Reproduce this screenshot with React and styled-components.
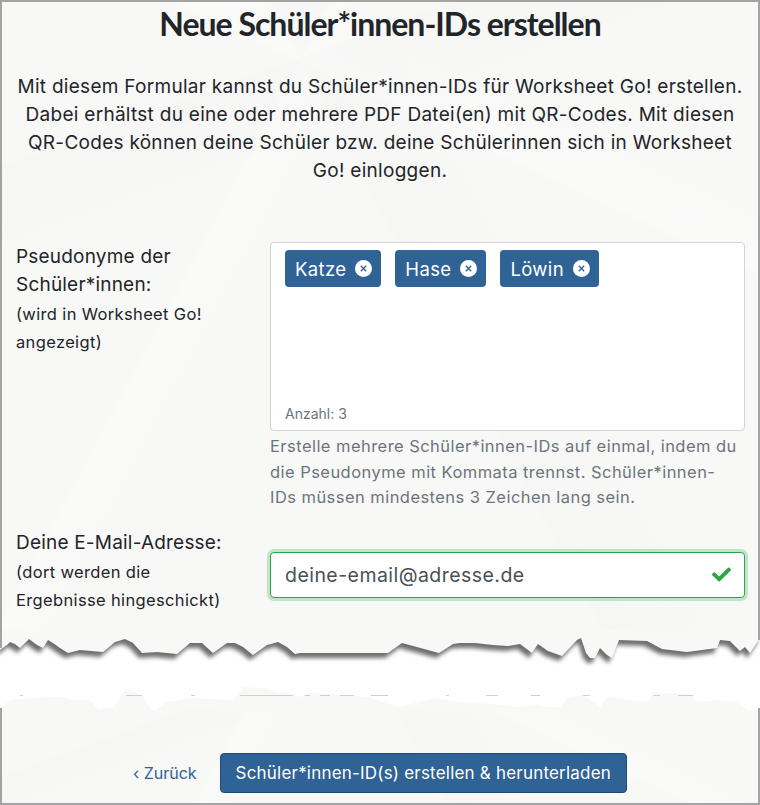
import React from "react";
import styled, { createGlobalStyle } from "styled-components";
import { FaCheck } from "react-icons/fa";

const TEXT_FONT = `Inter, "Open Sans", sans-serif`;
const PAPER = "#f8f8f7";
const BLUE = "#2f6295";

// torn paper edges, taken from the screenshot (y is relative to the top of the svg)
const upperEdge =
  "0,20 7,15 10,12 15,14 20,18 29,9 37,15 43,18 48,10 53,13 60,18 68,23 80,20 103,22 115,12 125,9 133,13 142,23 157,22 177,24 190,13 202,13 213,23 227,13 235,13 243,17 253,25 267,15 278,12 287,17 295,24 300,23 388,23 402,13 439,23 453,14 460,13 475,13 493,15 508,16 520,14 532,23 538,14 548,21 562,26 577,10 581,8 586,23 590,28 595,28 600,18 607,25 612,28 619,10 647,11 662,19 687,22 717,18 720,10 730,11 740,21 745,17 750,23 760,8";
const lowerEdge =
  "0,78 10,70 33,68 60,67 73,70 90,70 98,79 113,78 126,59 142,65 153,82 167,72 190,68 233,70 243,57 263,58 293,65 300,67 310,62 340,65 368,67 398,77 436,68 460,72 480,73 503,75 517,77 537,75 547,77 560,77 568,67 583,65 600,77 607,67 647,72 653,63 677,63 693,65 697,72 720,70 737,72 747,80 760,80";
const remnants = [
  [20, 23],
  [126, 142],
  [191, 195],
  [240, 293],
  [305, 310],
  [320, 330],
  [340, 354],
  [371, 388],
  [446, 449],
  [486, 498],
  [531, 540],
  [583, 590],
  [654, 660],
  [678, 693],
];

const chips = ["Katze", "Hase", "Löwin"];

const GlobalStyle = createGlobalStyle`
  html, body {
    margin: 0;
    padding: 0;
    background: #fff;
  }
  body {
    font-family: ${TEXT_FONT};
    color: #212529;
  }
`;

const Page = styled.div`
  width: 760px;
  height: 805px;
  overflow: hidden;
  display: flex;
  flex-direction: column;
`;

const paper = `
  background-color: ${PAPER};
  background-image:
    linear-gradient(118deg, transparent 30%, rgba(255,255,255,.3) 30.4%, transparent 36%),
    linear-gradient(62deg, transparent 55%, rgba(0,0,0,.006) 55.3%, transparent 68%),
    linear-gradient(160deg, transparent 18%, rgba(0,0,0,.006) 18.3%, transparent 30%),
    linear-gradient(25deg, transparent 72%, rgba(255,255,255,.3) 72.3%, transparent 80%);
`;

const UpperSheet = styled.div`
  ${paper}
  height: 630px;
  box-sizing: border-box;
  border: 2px solid #a3a3a3;
  border-bottom: 0;
`;

const LowerSheet = styled.div`
  ${paper}
  flex: 1;
  box-sizing: border-box;
  border: 2px solid #a3a3a3;
  border-top: 0;
  padding-top: 43px;
`;

const Title = styled.h1`
  margin: 0;
  text-align: center;
  font-family: Lato, sans-serif;
  font-size: 32px;
  font-weight: 700;
  line-height: 44px;
  letter-spacing: -1px;
  color: #212529;
`;

const Intro = styled.p`
  margin: 27px 0 57px;
  text-align: center;
  font-size: 19px;
  letter-spacing: 0.28px;
  line-height: 28px;
`;

const FormRow = styled.div`
  display: grid;
  grid-template-columns: 254px 475px;
  padding-left: 14px;
  margin-bottom: ${(p) => p.$gap || 0}px;
`;

const Label = styled.label`
  display: block;
  padding-top: 1px;
  font-size: 19px;
  letter-spacing: 0.2px;
  line-height: 28px;
`;

const LabelNote = styled.small`
  display: block;
  margin-top: 1px;
  font-size: 16.5px;
  letter-spacing: 0.35px;
  line-height: 28px;
`;

const TagBox = styled.div`
  box-sizing: border-box;
  height: 189px;
  padding: 7px 14px 6px;
  background: #fff;
  border: 1px solid #ced4da;
  border-radius: 4px;
  display: flex;
  flex-direction: column;
  justify-content: space-between;
`;

const TagList = styled.div`
  display: flex;
  gap: 14px;
`;

const Tag = styled.span`
  height: 37px;
  padding: 0 9px 0 10px;
  display: flex;
  align-items: center;
  gap: 9px;
  background: ${BLUE};
  border-radius: 4px;
  color: #fff;
  font-size: 18.5px;
  letter-spacing: 0.35px;
`;

const TagCounter = styled.div`
  font-size: 14px;
  line-height: 20px;
  color: #6c757d;
`;

const HelpText = styled.div`
  margin-top: 3px;
  font-size: 16.5px;
  letter-spacing: 0.45px;
  line-height: 25.5px;
  color: #6c757d;
`;

const EmailField = styled.div`
  box-sizing: border-box;
  height: 46px;
  margin-top: 24px;
  padding: 0 14px;
  display: flex;
  align-items: center;
  justify-content: space-between;
  background: #fff;
  border: 1px solid #28a745;
  border-radius: 4px;
  box-shadow: 0 0 0 3px rgba(40, 167, 69, 0.25);
  font-size: 19.5px;
  letter-spacing: 0.45px;
  color: #495057;
`;

const ValidIcon = styled(FaCheck)`
  width: 19px;
  height: 19px;
  margin-right: -1px;
  color: #28a745;
`;

const TornGap = styled.svg`
  display: block;
  flex: none;
`;

const Actions = styled.div`
  display: flex;
  align-items: center;
  justify-content: center;
  gap: 23px;
`;

const BackLink = styled.a`
  font-size: 16px;
  color: ${BLUE};
`;

const SubmitButton = styled.button`
  box-sizing: border-box;
  height: 40px;
  padding: 0 15px;
  background: ${BLUE};
  border: 1px solid #1f4a75;
  border-radius: 4px;
  color: #fff;
  font-family: ${TEXT_FONT};
  font-size: 17px;
  letter-spacing: 0.2px;
`;

const CloseIcon = () => (
  <svg width="17" height="17" viewBox="0 0 17 17">
    <circle cx="8.5" cy="8.5" r="8.5" fill="#fff" />
    <path d="M5.8 5.8l5.4 5.4M11.2 5.8l-5.4 5.4" stroke={BLUE} strokeWidth="1.3" fill="none" />
  </svg>
);

const TornEdges = () => (
  <TornGap width="760" height="80" viewBox="0 0 760 80">
    <defs>
      <filter id="tornShadow" x="-5%" y="-30%" width="110%" height="160%">
        <feGaussianBlur stdDeviation="2" />
      </filter>
    </defs>
    <rect width="760" height="80" fill="#fff" />
    <polygon points={`${lowerEdge} 760,80 0,80`} fill={PAPER} />
    {remnants.map(([from, to]) => (
      <rect key={from} x={from} y="65" width={to - from} height="1" fill="#cfcfcd" />
    ))}
    <rect x="0" y="78" width="2" height="2" fill="#a3a3a3" />
    <rect x="758" y="78" width="2" height="2" fill="#a3a3a3" />
    <polygon
      points={`${upperEdge} 760,0 0,0`}
      fill="#6e6e6e"
      filter="url(#tornShadow)"
      transform="translate(-3 5)"
    />
    <polygon points={`${upperEdge} 760,0 0,0`} fill={PAPER} />
    <rect x="0" y="0" width="2" height="18" fill="#a3a3a3" />
    <rect x="758" y="0" width="2" height="10" fill="#a3a3a3" />
  </TornGap>
);

const App = () => {
  return (
    <Page>
      <GlobalStyle />
      <UpperSheet>
        <Title>Neue Schüler*innen-IDs erstellen</Title>
        <Intro>
          Mit diesem Formular kannst du Schüler*innen-IDs für Worksheet Go! erstellen.
          <br />
          Dabei erhältst du eine oder mehrere PDF Datei(en) mit QR-Codes. Mit diesen
          <br />
          QR-Codes können deine Schüler bzw. deine Schülerinnen sich in Worksheet
          <br />
          Go! einloggen.
        </Intro>
        <FormRow $gap={17}>
          <Label>
            Pseudonyme der
            <br />
            Schüler*innen:
            <LabelNote>
              (wird in Worksheet Go!
              <br />
              angezeigt)
            </LabelNote>
          </Label>
          <div>
            <TagBox>
              <TagList>
                {chips.map((chip) => (
                  <Tag key={chip}>
                    {chip}
                    <CloseIcon />
                  </Tag>
                ))}
              </TagList>
              <TagCounter>Anzahl: {chips.length}</TagCounter>
            </TagBox>
            <HelpText>
              Erstelle mehrere Schüler*innen-IDs auf einmal, indem du
              <br />
              die Pseudonyme mit Kommata trennst. Schüler*innen-
              <br />
              IDs müssen mindestens 3 Zeichen lang sein.
            </HelpText>
          </div>
        </FormRow>
        <FormRow>
          <Label>
            Deine E-Mail-Adresse:
            <LabelNote>
              (dort werden die
              <br />
              Ergebnisse hingeschickt)
            </LabelNote>
          </Label>
          <EmailField>
            deine-email@adresse.de
            <ValidIcon />
          </EmailField>
        </FormRow>
      </UpperSheet>
      <TornEdges />
      <LowerSheet>
        <Actions>
          <BackLink>‹ Zurück</BackLink>
          <SubmitButton>Schüler*innen-ID(s) erstellen &amp; herunterladen</SubmitButton>
        </Actions>
      </LowerSheet>
    </Page>
  );
};

export default App;
